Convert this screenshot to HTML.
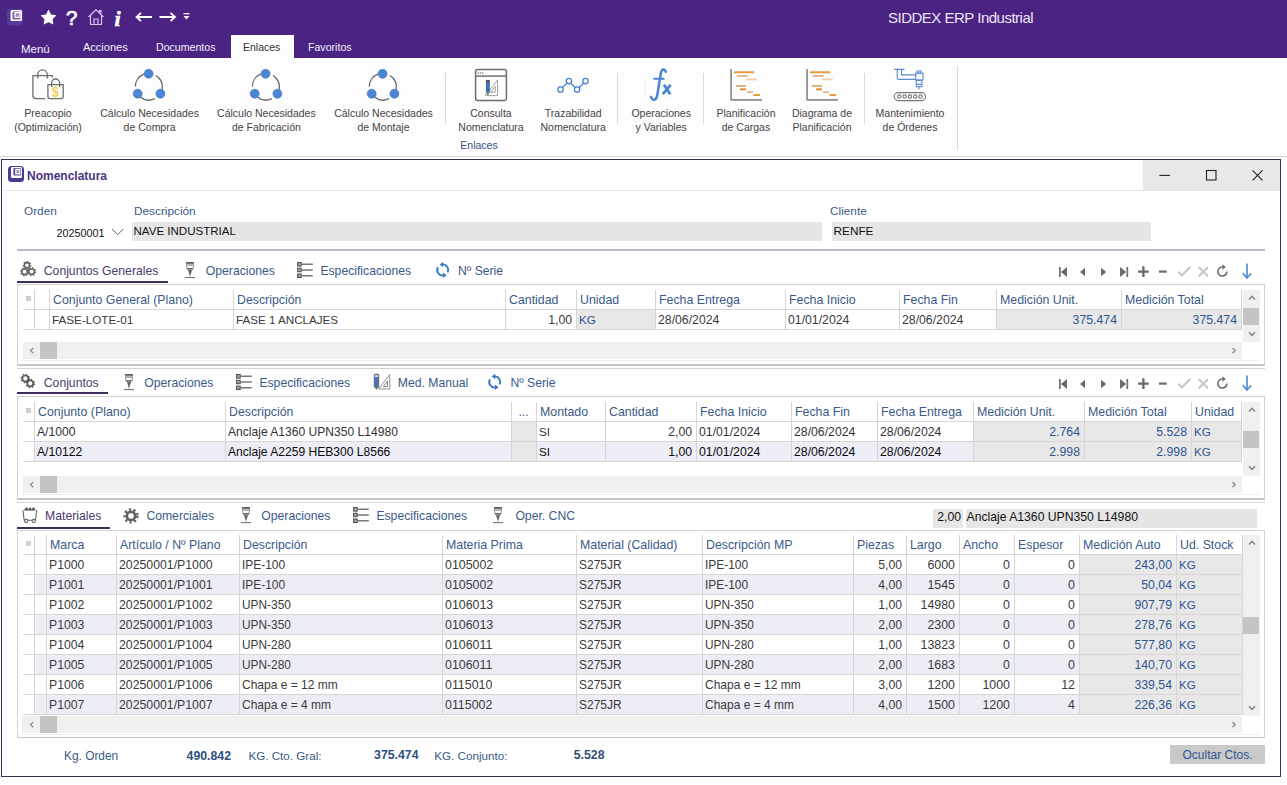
<!DOCTYPE html><html><head><meta charset="utf-8"><style>
html,body{margin:0;padding:0;}
body{width:1287px;height:785px;overflow:hidden;position:relative;background:#fefefe;font-family:'Liberation Sans',sans-serif;}
div{box-sizing:border-box;}
</style></head><body>
<div style="position:absolute;left:0px;top:0px;width:1287px;height:58px;background:#4b2383"></div>
<svg style="position:absolute;left:6px;top:8px;" width="18" height="18" viewBox="0 0 18 18"><rect x="1" y="1" width="16" height="16.5" rx="3" fill="#563a98"/><rect x="4.5" y="2" width="11.5" height="11" rx="1.5" fill="#fbf8ff"/><rect x="6.5" y="3.5" width="8" height="8" rx="1.2" fill="#7a66aa"/><rect x="9" y="4.6" width="5" height="4.8" rx="0.8" fill="#9c8cc4" stroke="#fff" stroke-width="1.3"/></svg>
<svg style="position:absolute;left:40px;top:9px;" width="17" height="17" viewBox="0 0 17 17"><path d="M8.50 0.60 L11.03 5.42 L16.39 6.34 L12.59 10.23 L13.38 15.61 L8.50 13.20 L3.62 15.61 L4.41 10.23 L0.61 6.34 L5.97 5.42 Z" fill="#fff"/></svg>
<div style="position:absolute;left:66px;top:7.50px;line-height:20px;font-family:'Liberation Sans',sans-serif;font-size:20.5px;color:#fff;font-weight:normal;white-space:nowrap;-webkit-text-stroke:0.7px #fff;">?</div>
<svg style="position:absolute;left:87px;top:8px;" width="18" height="18" viewBox="0 0 18 18"><path d="M1.5 9 L9 1.8 L16.5 9 M3.5 7.5 V16.5 H14.5 V7.5 M7 16.5 V11 H11 V16.5 M12.5 4 V2.5 H14 V5.5" fill="none" stroke="#d8c8f0" stroke-width="1.2"/></svg>
<div style="position:absolute;left:114.5px;top:8.50px;line-height:20px;font-family:'Liberation Serif',sans-serif;font-size:22px;color:#fff;font-weight:bold;white-space:nowrap;font-style:italic;-webkit-text-stroke:0.6px #fff;">i</div>
<svg style="position:absolute;left:135px;top:12px;" width="18" height="10" viewBox="0 0 18 10"><path d="M1.5 5 H17 M6 0.8 L1.5 5 L6 9.2" fill="none" stroke="#fff" stroke-width="1.8"/></svg>
<svg style="position:absolute;left:159px;top:12px;" width="18" height="10" viewBox="0 0 18 10"><path d="M0.5 5 H16 M11.5 0.8 L16 5 L11.5 9.2" fill="none" stroke="#fff" stroke-width="1.8"/></svg>
<svg style="position:absolute;left:183px;top:13px;" width="7" height="7" viewBox="0 0 7 7"><rect x="0.5" y="0" width="6" height="1.3" fill="#fff"/><path d="M0.5 3 H6.5 L3.5 6.5 Z" fill="#fff"/></svg>
<div style="position:absolute;left:888px;top:7.50px;line-height:20px;font-family:'Liberation Sans',sans-serif;font-size:15px;color:#ece6f6;font-weight:normal;white-space:nowrap;letter-spacing:-0.5px;">SIDDEX ERP Industrial</div>
<div style="position:absolute;left:21px;top:39.00px;line-height:20px;font-family:'Liberation Sans',sans-serif;font-size:11.5px;color:#f4f0fa;font-weight:normal;white-space:nowrap;">Menú</div>
<div style="position:absolute;left:83px;top:37.00px;line-height:20px;font-family:'Liberation Sans',sans-serif;font-size:11px;color:#f4f0fa;font-weight:normal;white-space:nowrap;">Acciones</div>
<div style="position:absolute;left:156px;top:37.00px;line-height:20px;font-family:'Liberation Sans',sans-serif;font-size:10.6px;color:#f4f0fa;font-weight:normal;white-space:nowrap;">Documentos</div>
<div style="position:absolute;left:231px;top:35px;width:63px;height:23px;background:#fdfdfd"></div>
<div style="position:absolute;left:243px;top:37.00px;line-height:20px;font-family:'Liberation Sans',sans-serif;font-size:10.5px;color:#333;font-weight:normal;white-space:nowrap;">Enlaces</div>
<div style="position:absolute;left:308px;top:37.00px;line-height:20px;font-family:'Liberation Sans',sans-serif;font-size:10.6px;color:#f4f0fa;font-weight:normal;white-space:nowrap;">Favoritos</div>
<div style="position:absolute;left:0px;top:156px;width:1287px;height:1px;background:#d4d4d4"></div>
<div style="position:absolute;left:0px;top:58px;width:1287px;height:98px;background:#fdfdfd"></div>
<svg style="position:absolute;left:26px;top:62px;" width="44" height="44" viewBox="0 0 44 44"><g fill="none" stroke="#6e6e6e" stroke-width="1.3">
<path d="M26.4 15.6 V13.6 H6.9 V33.6 Q6.9 36.7 10 36.7 H19.3"/>
<path d="M11.8 16.6 V12.6 A4.7 4.7 0 0 1 21.2 12.6 V16.6"/>
<path d="M21.9 22.6 H37.2 V34.6 Q37.2 36.7 35 36.7 H24.1 Q21.9 36.7 21.9 34.6 Z"/>
<path d="M25.6 25 V21 A4 4 0 0 1 33.6 21 V25"/></g>
<path d="M31.6 26.9 Q30.8 25.5 29.1 25.5 Q26.7 25.5 26.7 27.5 Q26.7 29.1 29.1 29.6 Q31.8 30.2 31.8 32.1 Q31.8 34.1 29.2 34.1 Q27.3 34.1 26.4 32.6" stroke="#f0d040" stroke-width="1.6" fill="none"/><path d="M29.2 23.8 V35.8" stroke="#f2dc70" stroke-width="0.9"/></svg>
<svg style="position:absolute;left:127px;top:62px;" width="44" height="44" viewBox="0 0 44 44"><g fill="none" stroke="#666" stroke-width="1.3">
<path d="M8.4 24.6 A13.2 13.2 0 0 1 16.8 12.2"/>
<path d="M29.0 13.5 A13.2 13.2 0 0 1 35.2 27.5"/>
<path d="M27.8 36.6 A13.2 13.2 0 0 1 13.4 35.0"/></g>
<g fill="#4a86d4" stroke="#3f70b8" stroke-width="0.6">
<circle cx="21.6" cy="11.8" r="4.5"/><circle cx="10.7" cy="31.7" r="4.5"/><circle cx="33.4" cy="31.7" r="4.5"/></g></svg>
<svg style="position:absolute;left:244px;top:62px;" width="44" height="44" viewBox="0 0 44 44"><g fill="none" stroke="#666" stroke-width="1.3">
<path d="M8.4 24.6 A13.2 13.2 0 0 1 16.8 12.2"/>
<path d="M29.0 13.5 A13.2 13.2 0 0 1 35.2 27.5"/>
<path d="M27.8 36.6 A13.2 13.2 0 0 1 13.4 35.0"/></g>
<g fill="#4a86d4" stroke="#3f70b8" stroke-width="0.6">
<circle cx="21.6" cy="11.8" r="4.5"/><circle cx="10.7" cy="31.7" r="4.5"/><circle cx="33.4" cy="31.7" r="4.5"/></g></svg>
<svg style="position:absolute;left:361px;top:62px;" width="44" height="44" viewBox="0 0 44 44"><g fill="none" stroke="#666" stroke-width="1.3">
<path d="M8.4 24.6 A13.2 13.2 0 0 1 16.8 12.2"/>
<path d="M29.0 13.5 A13.2 13.2 0 0 1 35.2 27.5"/>
<path d="M27.8 36.6 A13.2 13.2 0 0 1 13.4 35.0"/></g>
<g fill="#4a86d4" stroke="#3f70b8" stroke-width="0.6">
<circle cx="21.6" cy="11.8" r="4.5"/><circle cx="10.7" cy="31.7" r="4.5"/><circle cx="33.4" cy="31.7" r="4.5"/></g></svg>
<svg style="position:absolute;left:469px;top:62px;" width="44" height="44" viewBox="0 0 44 44"><g fill="none" stroke="#6e6e6e" stroke-width="1.5">
<rect x="6.6" y="7.5" width="30.8" height="31" rx="2"/><path d="M6.6 14.1 H37.4"/></g>
<g fill="#777"><rect x="8.7" y="10.3" width="1.3" height="1.3"/><rect x="10.9" y="10.3" width="1.3" height="1.3"/><rect x="13" y="10.3" width="1.3" height="1.3"/></g>
<path d="M16.3 33.6 H28.6 V18.2 Z M21.5 30.2 H26.2 V24.6 Z" fill="none" stroke="#888" stroke-width="0.8"/>
<rect x="16.9" y="18" width="4" height="2" fill="#555"/><rect x="16.9" y="20" width="4" height="10.4" fill="#3d70b2"/><path d="M16.9 30.4 H20.9 L18.9 33.5 Z" fill="#777"/></svg>
<svg style="position:absolute;left:551px;top:62px;" width="44" height="44" viewBox="0 0 44 44"><g fill="none" stroke="#4d80c8" stroke-width="1.3">
<path d="M11.5 25.5 L16 21.1 M19.9 21.1 L24.1 25.5 M28.1 25.5 L32.5 21.1"/>
<circle cx="9.5" cy="27.5" r="2.7"/><circle cx="17.9" cy="19.1" r="2.7"/><circle cx="26.1" cy="27.5" r="2.7"/><circle cx="34.5" cy="19.1" r="2.7"/></g></svg>
<svg style="position:absolute;left:639px;top:62px;" width="44" height="44" viewBox="0 0 44 44"><g fill="none" stroke="#4a86d0" stroke-linecap="round">
<path d="M12 35 Q13.5 38.3 15.8 37.6 Q17.6 37 18.3 33 L21.8 11.2 Q22.6 7.4 24.6 7.4 Q26.2 7.5 26.8 9.8" stroke-width="2.5"/>
<path d="M15.3 16.8 H24.6" stroke-width="2"/>
<path d="M25 22.8 L31.2 32.2 M31.6 22.8 L23.8 32.2" stroke-width="2.8" stroke-linecap="butt"/></g>
<path d="M6.4 18.5 V33.6" stroke="#e4e4e4" stroke-width="0.8"/></svg>
<svg style="position:absolute;left:723px;top:62px;" width="44" height="44" viewBox="0 0 44 44"><path d="M8.1 7 V37.8 H39" fill="none" stroke="#8c8c8c" stroke-width="1.7"/><rect x="10.9" y="9.3" width="20.200000000000003" height="1.9" fill="#e39b32"/><rect x="13.7" y="13.0" width="11.0" height="1.9" fill="#d9bb86"/><rect x="23" y="16.4" width="10.600000000000001" height="1.9" fill="#f2cdb0"/><rect x="12.9" y="23.0" width="10.1" height="1.9" fill="#dbb274"/><rect x="17.1" y="26.4" width="5.899999999999999" height="1.9" fill="#e28a22"/><rect x="24.1" y="29.2" width="5.899999999999999" height="1.9" fill="#dabb94"/><rect x="30.5" y="32.1" width="6.5" height="1.9" fill="#e99a2c"/></svg>
<svg style="position:absolute;left:798.5px;top:62px;" width="44" height="44" viewBox="0 0 44 44"><path d="M8.1 7 V37.8 H39" fill="none" stroke="#8c8c8c" stroke-width="1.7"/><rect x="10.9" y="9.3" width="20.200000000000003" height="1.9" fill="#e39b32"/><rect x="13.7" y="13.0" width="11.0" height="1.9" fill="#d9bb86"/><rect x="23" y="16.4" width="10.600000000000001" height="1.9" fill="#f2cdb0"/><rect x="12.9" y="23.0" width="10.1" height="1.9" fill="#dbb274"/><rect x="17.1" y="26.4" width="5.899999999999999" height="1.9" fill="#e28a22"/><rect x="24.1" y="29.2" width="5.899999999999999" height="1.9" fill="#dabb94"/><rect x="30.5" y="32.1" width="6.5" height="1.9" fill="#e99a2c"/></svg>
<svg style="position:absolute;left:888px;top:62px;" width="44" height="44" viewBox="0 0 44 44"><g fill="none" stroke="#5a8ad0" stroke-width="1.1">
<path d="M6.2 7.4 H16.5 M9.2 7.6 V15.8 Q9.2 17.4 10.9 17.4 H27.7 M13.5 7.6 V12.9 H27.7"/>
<rect x="27.7" y="11.2" width="7.3" height="6.7"/><rect x="29.1" y="9" width="3.9" height="2.2"/>
<rect x="28.3" y="18.5" width="5.6" height="6.2"/><path d="M28.3 22.4 H33.9 M31 24.7 V27.5" /></g>
<g fill="none" stroke="#7a7a7a" stroke-width="1.1">
<rect x="6.2" y="30.6" width="31.4" height="8" rx="4"/>
<circle cx="11.3" cy="34.6" r="1.7"/><circle cx="16.6" cy="34.6" r="1.7"/><circle cx="21.9" cy="34.6" r="1.7"/><circle cx="27.2" cy="34.6" r="1.7"/><circle cx="32.5" cy="34.6" r="1.7"/></g></svg>
<div style="position:absolute;left:445px;top:73px;width:1px;height:51px;background:#d8d8d8"></div>
<div style="position:absolute;left:617px;top:73px;width:1px;height:51px;background:#d8d8d8"></div>
<div style="position:absolute;left:703px;top:73px;width:1px;height:51px;background:#d8d8d8"></div>
<div style="position:absolute;left:864px;top:73px;width:1px;height:51px;background:#d8d8d8"></div>
<div style="position:absolute;left:957px;top:66px;width:1px;height:84px;background:#d8d8d8"></div>
<div style="position:absolute;left:-17.0px;width:130px;text-align:center;top:103.00px;line-height:20px;font-family:'Liberation Sans',sans-serif;font-size:10.5px;color:#444;font-weight:normal;white-space:nowrap;">Preacopio</div>
<div style="position:absolute;left:-17.0px;width:130px;text-align:center;top:117.00px;line-height:20px;font-family:'Liberation Sans',sans-serif;font-size:10.5px;color:#444;font-weight:normal;white-space:nowrap;">(Optimización)</div>
<div style="position:absolute;left:84.6px;width:130px;text-align:center;top:103.00px;line-height:20px;font-family:'Liberation Sans',sans-serif;font-size:10.5px;color:#444;font-weight:normal;white-space:nowrap;">Cálculo Necesidades</div>
<div style="position:absolute;left:84.6px;width:130px;text-align:center;top:117.00px;line-height:20px;font-family:'Liberation Sans',sans-serif;font-size:10.5px;color:#444;font-weight:normal;white-space:nowrap;">de Compra</div>
<div style="position:absolute;left:201.39999999999998px;width:130px;text-align:center;top:103.00px;line-height:20px;font-family:'Liberation Sans',sans-serif;font-size:10.5px;color:#444;font-weight:normal;white-space:nowrap;">Cálculo Necesidades</div>
<div style="position:absolute;left:201.39999999999998px;width:130px;text-align:center;top:117.00px;line-height:20px;font-family:'Liberation Sans',sans-serif;font-size:10.5px;color:#444;font-weight:normal;white-space:nowrap;">de Fabricación</div>
<div style="position:absolute;left:318.5px;width:130px;text-align:center;top:103.00px;line-height:20px;font-family:'Liberation Sans',sans-serif;font-size:10.5px;color:#444;font-weight:normal;white-space:nowrap;">Cálculo Necesidades</div>
<div style="position:absolute;left:318.5px;width:130px;text-align:center;top:117.00px;line-height:20px;font-family:'Liberation Sans',sans-serif;font-size:10.5px;color:#444;font-weight:normal;white-space:nowrap;">de Montaje</div>
<div style="position:absolute;left:426.0px;width:130px;text-align:center;top:103.00px;line-height:20px;font-family:'Liberation Sans',sans-serif;font-size:10.5px;color:#444;font-weight:normal;white-space:nowrap;">Consulta</div>
<div style="position:absolute;left:426.0px;width:130px;text-align:center;top:117.00px;line-height:20px;font-family:'Liberation Sans',sans-serif;font-size:10.5px;color:#444;font-weight:normal;white-space:nowrap;">Nomenclatura</div>
<div style="position:absolute;left:508.20000000000005px;width:130px;text-align:center;top:103.00px;line-height:20px;font-family:'Liberation Sans',sans-serif;font-size:10.5px;color:#444;font-weight:normal;white-space:nowrap;">Trazabilidad</div>
<div style="position:absolute;left:508.20000000000005px;width:130px;text-align:center;top:117.00px;line-height:20px;font-family:'Liberation Sans',sans-serif;font-size:10.5px;color:#444;font-weight:normal;white-space:nowrap;">Nomenclatura</div>
<div style="position:absolute;left:596.2px;width:130px;text-align:center;top:103.00px;line-height:20px;font-family:'Liberation Sans',sans-serif;font-size:10.5px;color:#444;font-weight:normal;white-space:nowrap;">Operaciones</div>
<div style="position:absolute;left:596.2px;width:130px;text-align:center;top:117.00px;line-height:20px;font-family:'Liberation Sans',sans-serif;font-size:10.5px;color:#444;font-weight:normal;white-space:nowrap;">y Variables</div>
<div style="position:absolute;left:681.0px;width:130px;text-align:center;top:103.00px;line-height:20px;font-family:'Liberation Sans',sans-serif;font-size:10.5px;color:#444;font-weight:normal;white-space:nowrap;">Planificación</div>
<div style="position:absolute;left:681.0px;width:130px;text-align:center;top:117.00px;line-height:20px;font-family:'Liberation Sans',sans-serif;font-size:10.5px;color:#444;font-weight:normal;white-space:nowrap;">de Cargas</div>
<div style="position:absolute;left:757.0px;width:130px;text-align:center;top:103.00px;line-height:20px;font-family:'Liberation Sans',sans-serif;font-size:10.5px;color:#444;font-weight:normal;white-space:nowrap;">Diagrama de</div>
<div style="position:absolute;left:757.0px;width:130px;text-align:center;top:117.00px;line-height:20px;font-family:'Liberation Sans',sans-serif;font-size:10.5px;color:#444;font-weight:normal;white-space:nowrap;">Planificación</div>
<div style="position:absolute;left:845.0px;width:130px;text-align:center;top:103.00px;line-height:20px;font-family:'Liberation Sans',sans-serif;font-size:10.5px;color:#444;font-weight:normal;white-space:nowrap;">Mantenimiento</div>
<div style="position:absolute;left:845.0px;width:130px;text-align:center;top:117.00px;line-height:20px;font-family:'Liberation Sans',sans-serif;font-size:10.5px;color:#444;font-weight:normal;white-space:nowrap;">de Órdenes</div>
<div style="position:absolute;left:439.0px;width:80px;text-align:center;top:135.00px;line-height:20px;font-family:'Liberation Sans',sans-serif;font-size:10.5px;color:#2f5080;font-weight:normal;white-space:nowrap;">Enlaces</div>
<div style="position:absolute;left:1px;top:159px;width:1280px;height:618px;background:#fff;border:1px solid #3b3056"></div>
<div style="position:absolute;left:3px;top:190px;width:1277px;height:1px;background:#e6e6e6"></div>
<svg style="position:absolute;left:8px;top:166px;" width="16" height="16" viewBox="0 0 16 16"><rect x="0" y="0" width="16" height="16" rx="3.5" fill="#4a3a94"/><rect x="3" y="1" width="11" height="11" rx="1.2" fill="#fff"/><rect x="5.3" y="2" width="7.8" height="7.6" rx="1" fill="#5e4ca0"/><rect x="7.9" y="3.4" width="3.9" height="4.4" fill="#9890b8" stroke="#fff" stroke-width="1.3"/></svg>
<div style="position:absolute;left:27px;top:166.00px;line-height:20px;font-family:'Liberation Sans',sans-serif;font-size:12px;color:#4a3580;font-weight:bold;white-space:nowrap;">Nomenclatura</div>
<div style="position:absolute;left:1143px;top:160px;width:137px;height:30px;background:#e8e8e8"></div>
<svg style="position:absolute;left:1143px;top:160px;" width="137" height="30" viewBox="0 0 137 30"><g stroke="#222" stroke-width="1.1" fill="none"><path d="M16.4 15.4 H27"/><rect x="63.5" y="10.5" width="9.5" height="9.5"/><path d="M109.5 10.3 L119.5 20.3 M119.5 10.3 L109.5 20.3"/></g></svg>
<div style="position:absolute;left:24px;top:201.00px;line-height:20px;font-family:'Liberation Sans',sans-serif;font-size:11.8px;color:#3a5a86;font-weight:normal;white-space:nowrap;">Orden</div>
<div style="position:absolute;left:134px;top:201.00px;line-height:20px;font-family:'Liberation Sans',sans-serif;font-size:11.8px;color:#3a5a86;font-weight:normal;white-space:nowrap;">Descripción</div>
<div style="position:absolute;left:830px;top:201.00px;line-height:20px;font-family:'Liberation Sans',sans-serif;font-size:11.8px;color:#3a5a86;font-weight:normal;white-space:nowrap;">Cliente</div>
<div style="position:absolute;right:1182.5px;top:223.00px;line-height:20px;font-family:'Liberation Sans',sans-serif;font-size:10.8px;color:#111;font-weight:normal;white-space:nowrap;">20250001</div>
<svg style="position:absolute;left:111px;top:228px;" width="14" height="8" viewBox="0 0 14 8"><path d="M1 1 L6.7 6.5 L12.4 1" fill="none" stroke="#555" stroke-width="0.9"/></svg>
<div style="position:absolute;left:132px;top:222px;width:690px;height:19px;background:#e6e6e6"></div>
<div style="position:absolute;left:133.5px;top:221.00px;line-height:20px;font-family:'Liberation Sans',sans-serif;font-size:11.55px;color:#111;font-weight:normal;white-space:nowrap;">NAVE INDUSTRIAL</div>
<div style="position:absolute;left:832px;top:222px;width:319px;height:19px;background:#e6e6e6"></div>
<div style="position:absolute;left:833.5px;top:221.00px;line-height:20px;font-family:'Liberation Sans',sans-serif;font-size:11.8px;color:#111;font-weight:normal;white-space:nowrap;">RENFE</div>
<div style="position:absolute;left:17px;top:249px;width:1248px;height:2px;background:#bdbac8"></div>
<svg style="position:absolute;left:16px;top:258px;" width="24" height="24" viewBox="0 0 24 24"><circle cx="11" cy="7.2" r="2.6" fill="none" stroke="#666" stroke-width="1.6"/><circle cx="11" cy="7.2" r="3.6" fill="none" stroke="#666" stroke-width="1.6" stroke-dasharray="1.45 1.78"/><circle cx="8.6" cy="13.8" r="2.8" fill="none" stroke="#666" stroke-width="1.6"/><circle cx="8.6" cy="13.8" r="3.8" fill="none" stroke="#666" stroke-width="1.6" stroke-dasharray="1.34 1.64"/><circle cx="15.6" cy="13.6" r="2.8" fill="none" stroke="#666" stroke-width="1.6"/><circle cx="15.6" cy="13.6" r="3.8" fill="none" stroke="#666" stroke-width="1.6" stroke-dasharray="1.34 1.64"/></svg>
<div style="position:absolute;left:43.8px;top:261.00px;line-height:20px;font-family:'Liberation Sans',sans-serif;font-size:12.2px;color:#4a3a6e;font-weight:normal;white-space:nowrap;">Conjuntos Generales</div>
<svg style="position:absolute;left:180px;top:258px;" width="20" height="24" viewBox="0 0 20 24"><rect x="6" y="4" width="8" height="1.8" fill="#5e5e5e"/>
<path d="M6.7 5.8 V8.8 Q6.7 10.8 8 12 H12 Q13.3 10.8 13.3 8.8 V5.8" fill="none" stroke="#888" stroke-width="1"/>
<rect x="7.2" y="6.4" width="5.6" height="1.3" fill="#8a8a8a"/><rect x="7.2" y="10" width="5.6" height="1.4" fill="#6a6a6a"/>
<path d="M8 12 H12 L10.4 17.4 H9.6 Z" fill="#666"/>
<rect x="9.6" y="17.2" width="0.8" height="1.8" fill="#aaa"/><rect x="5" y="19" width="10" height="1.1" fill="#777"/></svg>
<div style="position:absolute;left:205.8px;top:261.00px;line-height:20px;font-family:'Liberation Sans',sans-serif;font-size:12.2px;color:#3a5a88;font-weight:normal;white-space:nowrap;">Operaciones</div>
<svg style="position:absolute;left:294px;top:258px;" width="24" height="24" viewBox="0 0 24 24"><g fill="#a4a8b4" stroke="#555" stroke-width="1.1"><rect x="3.6" y="4.5" width="3.6" height="3.6"/><rect x="3.6" y="10.3" width="3.6" height="3.4"/><rect x="3.6" y="16.1" width="3.6" height="3.4"/></g>
<g stroke="#777" stroke-width="1.5"><path d="M7.6 6.3 H18.8 M7.6 11.9 H18.8 M7.6 17.7 H18.8"/></g></svg>
<div style="position:absolute;left:320.4px;top:261.00px;line-height:20px;font-family:'Liberation Sans',sans-serif;font-size:12.2px;color:#3a5a88;font-weight:normal;white-space:nowrap;">Especificaciones</div>
<svg style="position:absolute;left:432px;top:258px;" width="24" height="24" viewBox="0 0 24 24"><g fill="none" stroke="#3d78c0" stroke-width="1.9"><path d="M10.8 6.4 A5.5 5.5 0 0 1 15.6 14.3"/><path d="M6 9.2 A5.5 5.5 0 0 0 11.4 17.5"/></g>
<path d="M11.2 3.8 L7.7 6.4 L11.2 9.2 Z M11 14.6 L14.6 17.3 L11 20 Z" fill="#3d78c0"/></svg>
<div style="position:absolute;left:458px;top:261.00px;line-height:20px;font-family:'Liberation Sans',sans-serif;font-size:12.2px;color:#3a5a88;font-weight:normal;white-space:nowrap;">Nº Serie</div>
<div style="position:absolute;left:17px;top:281px;width:151px;height:2px;background:#3e2d5e"></div>
<svg style="position:absolute;left:1055px;top:258px;" width="200" height="24" viewBox="0 0 200 24"><rect x="4" y="9" width="1.7" height="10" fill="#6a6a6a"/><path d="M12 9 L6 14 L12 19 Z" fill="#6a6a6a"/>
<path d="M30 9.8 L25 14 L30 18.2 Z" fill="#6a6a6a"/>
<path d="M46 9.8 L51.3 14 L46 18.2 Z" fill="#6a6a6a"/>
<path d="M65 9 L71.2 14 L65 19 Z" fill="#6a6a6a"/><rect x="71.5" y="9" width="1.7" height="10" fill="#6a6a6a"/>
<path d="M83 13.6 H93.7 M88.4 8.3 V19" stroke="#6a6a6a" stroke-width="2.3"/>
<path d="M104 13.6 H111.7" stroke="#6a6a6a" stroke-width="2.2"/>
<path d="M123.3 13.6 L126.6 17.6 L135.2 9" fill="none" stroke="#c4c4c4" stroke-width="1.9"/>
<path d="M143.8 9.3 L153 18.3 M153 9.3 L143.8 18.3" stroke="#c4c4c4" stroke-width="1.9"/>
<path d="M167.4 9 A4.5 4.5 0 1 0 171.9 13.5" fill="none" stroke="#6a6a6a" stroke-width="1.6"/><path d="M167.4 6.2 L170.8 9 L167.4 11.8 Z" fill="#6a6a6a"/>
<path d="M192 5.5 V19.5" stroke="#4a86d0" stroke-width="1.6"/><path d="M187.8 15.2 L192 20 L196.2 15.2" fill="none" stroke="#4a86d0" stroke-width="1.6"/></svg>
<div style="position:absolute;left:17px;top:284px;width:1248px;height:82px;border:1px solid #d2d2d2;border-bottom:2px solid #c6c6c6;background:#fff"></div>
<div style="position:absolute;left:576px;top:310px;width:79px;height:19px;background:#e8e8e8"></div>
<div style="position:absolute;left:996px;top:310px;width:125px;height:19px;background:#e8e8e8"></div>
<div style="position:absolute;left:1121px;top:310px;width:120px;height:19px;background:#e8e8e8"></div>
<div style="position:absolute;left:34px;top:290px;width:1px;height:40px;background:#d6d6d6"></div>
<div style="position:absolute;left:49px;top:290px;width:1px;height:40px;background:#d6d6d6"></div>
<div style="position:absolute;left:233px;top:290px;width:1px;height:40px;background:#d6d6d6"></div>
<div style="position:absolute;left:505px;top:290px;width:1px;height:40px;background:#d6d6d6"></div>
<div style="position:absolute;left:576px;top:290px;width:1px;height:40px;background:#d6d6d6"></div>
<div style="position:absolute;left:655px;top:290px;width:1px;height:40px;background:#d6d6d6"></div>
<div style="position:absolute;left:785px;top:290px;width:1px;height:40px;background:#d6d6d6"></div>
<div style="position:absolute;left:899px;top:290px;width:1px;height:40px;background:#d6d6d6"></div>
<div style="position:absolute;left:996px;top:290px;width:1px;height:40px;background:#d6d6d6"></div>
<div style="position:absolute;left:1121px;top:290px;width:1px;height:40px;background:#d6d6d6"></div>
<div style="position:absolute;left:1241px;top:290px;width:1px;height:40px;background:#d6d6d6"></div>
<div style="position:absolute;left:23px;top:309px;width:1219px;height:1px;background:#d6d6d6"></div>
<div style="position:absolute;left:23px;top:329px;width:1219px;height:1px;background:#d6d6d6"></div>
<div style="position:absolute;left:26px;top:296px;width:5px;height:5px;background:#cfcfcf"></div>
<div style="position:absolute;left:53px;top:290.00px;line-height:20px;font-family:'Liberation Sans',sans-serif;font-size:12.35px;color:#3a5a88;font-weight:normal;white-space:nowrap;">Conjunto General (Plano)</div>
<div style="position:absolute;left:237px;top:290.00px;line-height:20px;font-family:'Liberation Sans',sans-serif;font-size:12.35px;color:#3a5a88;font-weight:normal;white-space:nowrap;">Descripción</div>
<div style="position:absolute;left:509px;top:290.00px;line-height:20px;font-family:'Liberation Sans',sans-serif;font-size:12.35px;color:#3a5a88;font-weight:normal;white-space:nowrap;">Cantidad</div>
<div style="position:absolute;left:580px;top:290.00px;line-height:20px;font-family:'Liberation Sans',sans-serif;font-size:12.35px;color:#3a5a88;font-weight:normal;white-space:nowrap;">Unidad</div>
<div style="position:absolute;left:659px;top:290.00px;line-height:20px;font-family:'Liberation Sans',sans-serif;font-size:12.35px;color:#3a5a88;font-weight:normal;white-space:nowrap;">Fecha Entrega</div>
<div style="position:absolute;left:789px;top:290.00px;line-height:20px;font-family:'Liberation Sans',sans-serif;font-size:12.35px;color:#3a5a88;font-weight:normal;white-space:nowrap;">Fecha Inicio</div>
<div style="position:absolute;left:903px;top:290.00px;line-height:20px;font-family:'Liberation Sans',sans-serif;font-size:12.35px;color:#3a5a88;font-weight:normal;white-space:nowrap;">Fecha Fin</div>
<div style="position:absolute;left:1000px;top:290.00px;line-height:20px;font-family:'Liberation Sans',sans-serif;font-size:12.35px;color:#3a5a88;font-weight:normal;white-space:nowrap;">Medición Unit.</div>
<div style="position:absolute;left:1125px;top:290.00px;line-height:20px;font-family:'Liberation Sans',sans-serif;font-size:12.35px;color:#3a5a88;font-weight:normal;white-space:nowrap;">Medición Total</div>
<div style="position:absolute;left:52px;top:309.50px;line-height:20px;font-family:'Liberation Sans',sans-serif;font-size:11.69px;color:#3a3a3a;font-weight:normal;white-space:nowrap;">FASE-LOTE-01</div>
<div style="position:absolute;left:236px;top:309.50px;line-height:20px;font-family:'Liberation Sans',sans-serif;font-size:11.63px;color:#3a3a3a;font-weight:normal;white-space:nowrap;">FASE 1 ANCLAJES</div>
<div style="position:absolute;right:715px;top:310.00px;line-height:20px;font-family:'Liberation Sans',sans-serif;font-size:12.23px;color:#3a3a3a;font-weight:normal;white-space:nowrap;">1,00</div>
<div style="position:absolute;left:579px;top:310.00px;line-height:20px;font-family:'Liberation Sans',sans-serif;font-size:11.6px;color:#30558f;font-weight:normal;white-space:nowrap;">KG</div>
<div style="position:absolute;left:658px;top:310.00px;line-height:20px;font-family:'Liberation Sans',sans-serif;font-size:12.27px;color:#3a3a3a;font-weight:normal;white-space:nowrap;">28/06/2024</div>
<div style="position:absolute;left:788px;top:310.00px;line-height:20px;font-family:'Liberation Sans',sans-serif;font-size:12.27px;color:#3a3a3a;font-weight:normal;white-space:nowrap;">01/01/2024</div>
<div style="position:absolute;left:902px;top:310.00px;line-height:20px;font-family:'Liberation Sans',sans-serif;font-size:12.27px;color:#3a3a3a;font-weight:normal;white-space:nowrap;">28/06/2024</div>
<div style="position:absolute;right:170px;top:310.00px;line-height:20px;font-family:'Liberation Sans',sans-serif;font-size:12.31px;color:#30558f;font-weight:normal;white-space:nowrap;">375.474</div>
<div style="position:absolute;right:50px;top:310.00px;line-height:20px;font-family:'Liberation Sans',sans-serif;font-size:12.31px;color:#30558f;font-weight:normal;white-space:nowrap;">375.474</div>
<div style="position:absolute;left:1243px;top:290px;width:17px;height:52px;background:#f0f0f0"></div>
<div style="position:absolute;left:1243px;top:308px;width:16px;height:17px;background:#c4c4c4"></div>
<svg style="position:absolute;left:1248px;top:295px;" width="8" height="6" viewBox="0 0 8 6"><path d="M1 4.5 L4 1.3 L7 4.5" fill="none" stroke="#808080" stroke-width="1.4"/></svg>
<svg style="position:absolute;left:1248px;top:331px;" width="8" height="6" viewBox="0 0 8 6"><path d="M1 1.3 L4 4.5 L7 1.3" fill="none" stroke="#808080" stroke-width="1.4"/></svg>
<div style="position:absolute;left:23px;top:342px;width:1219px;height:17px;background:#f0f0f0"></div>
<div style="position:absolute;left:40px;top:342px;width:17px;height:17px;background:#c4c4c4"></div>
<div style="position:absolute;left:21px;top:360px;width:1239px;height:1px;background:#f0f0f0"></div>
<svg style="position:absolute;left:29px;top:347px;" width="6" height="7" viewBox="0 0 6 7"><path d="M4.3 1 L1.5 3.6 L4.3 6.2" fill="none" stroke="#8a8a8a" stroke-width="1.2"/></svg>
<svg style="position:absolute;left:1231px;top:347px;" width="6" height="7" viewBox="0 0 6 7"><path d="M1.5 1 L4.3 3.6 L1.5 6.2" fill="none" stroke="#8a8a8a" stroke-width="1.2"/></svg>
<div style="position:absolute;left:17px;top:368px;width:1248px;height:1px;background:#d2d2d2"></div>
<svg style="position:absolute;left:16px;top:370px;" width="24" height="24" viewBox="0 0 24 24"><circle cx="9.3" cy="8.5" r="3.0" fill="none" stroke="#5a5a5a" stroke-width="1.7"/><circle cx="9.3" cy="8.5" r="4.0" fill="none" stroke="#5a5a5a" stroke-width="1.6" stroke-dasharray="1.41 1.73"/><circle cx="14.3" cy="13.5" r="3.0" fill="none" stroke="#5a5a5a" stroke-width="1.7"/><circle cx="14.3" cy="13.5" r="4.0" fill="none" stroke="#5a5a5a" stroke-width="1.6" stroke-dasharray="1.41 1.73"/></svg>
<div style="position:absolute;left:43.8px;top:373.00px;line-height:20px;font-family:'Liberation Sans',sans-serif;font-size:12.2px;color:#4a3a6e;font-weight:normal;white-space:nowrap;">Conjuntos</div>
<svg style="position:absolute;left:119px;top:370px;" width="20" height="24" viewBox="0 0 20 24"><rect x="6" y="4" width="8" height="1.8" fill="#5e5e5e"/>
<path d="M6.7 5.8 V8.8 Q6.7 10.8 8 12 H12 Q13.3 10.8 13.3 8.8 V5.8" fill="none" stroke="#888" stroke-width="1"/>
<rect x="7.2" y="6.4" width="5.6" height="1.3" fill="#8a8a8a"/><rect x="7.2" y="10" width="5.6" height="1.4" fill="#6a6a6a"/>
<path d="M8 12 H12 L10.4 17.4 H9.6 Z" fill="#666"/>
<rect x="9.6" y="17.2" width="0.8" height="1.8" fill="#aaa"/><rect x="5" y="19" width="10" height="1.1" fill="#777"/></svg>
<div style="position:absolute;left:144.3px;top:373.00px;line-height:20px;font-family:'Liberation Sans',sans-serif;font-size:12.2px;color:#3a5a88;font-weight:normal;white-space:nowrap;">Operaciones</div>
<svg style="position:absolute;left:233px;top:370px;" width="24" height="24" viewBox="0 0 24 24"><g fill="#a4a8b4" stroke="#555" stroke-width="1.1"><rect x="3.6" y="4.5" width="3.6" height="3.6"/><rect x="3.6" y="10.3" width="3.6" height="3.4"/><rect x="3.6" y="16.1" width="3.6" height="3.4"/></g>
<g stroke="#777" stroke-width="1.5"><path d="M7.6 6.3 H18.8 M7.6 11.9 H18.8 M7.6 17.7 H18.8"/></g></svg>
<div style="position:absolute;left:259.4px;top:373.00px;line-height:20px;font-family:'Liberation Sans',sans-serif;font-size:12.2px;color:#3a5a88;font-weight:normal;white-space:nowrap;">Especificaciones</div>
<svg style="position:absolute;left:370px;top:370px;" width="24" height="24" viewBox="0 0 24 24"><path d="M8.6 19 H19.8 V4.4 Z" fill="none" stroke="#888" stroke-width="0.9"/><path d="M13.3 16.5 H17.5 V11.2 Z" fill="none" stroke="#777" stroke-width="0.9"/>
<rect x="4.3" y="4.2" width="4.4" height="13.2" rx="1" fill="#4a70b8" stroke="#555" stroke-width="0.8"/><rect x="5" y="5.2" width="3" height="1.8" fill="#dfe8f8"/><path d="M4.4 17.2 L6.5 19.7 L8.6 17.2 Z" fill="#8a7060"/></svg>
<div style="position:absolute;left:397.8px;top:373.00px;line-height:20px;font-family:'Liberation Sans',sans-serif;font-size:12.2px;color:#3a5a88;font-weight:normal;white-space:nowrap;">Med. Manual</div>
<svg style="position:absolute;left:484px;top:370px;" width="24" height="24" viewBox="0 0 24 24"><g fill="none" stroke="#3d78c0" stroke-width="1.9"><path d="M10.8 6.4 A5.5 5.5 0 0 1 15.6 14.3"/><path d="M6 9.2 A5.5 5.5 0 0 0 11.4 17.5"/></g>
<path d="M11.2 3.8 L7.7 6.4 L11.2 9.2 Z M11 14.6 L14.6 17.3 L11 20 Z" fill="#3d78c0"/></svg>
<div style="position:absolute;left:510.4px;top:373.00px;line-height:20px;font-family:'Liberation Sans',sans-serif;font-size:12.2px;color:#3a5a88;font-weight:normal;white-space:nowrap;">Nº Serie</div>
<div style="position:absolute;left:17px;top:392px;width:91px;height:2px;background:#3e2d5e"></div>
<svg style="position:absolute;left:1055px;top:370px;" width="200" height="24" viewBox="0 0 200 24"><rect x="4" y="9" width="1.7" height="10" fill="#6a6a6a"/><path d="M12 9 L6 14 L12 19 Z" fill="#6a6a6a"/>
<path d="M30 9.8 L25 14 L30 18.2 Z" fill="#6a6a6a"/>
<path d="M46 9.8 L51.3 14 L46 18.2 Z" fill="#6a6a6a"/>
<path d="M65 9 L71.2 14 L65 19 Z" fill="#6a6a6a"/><rect x="71.5" y="9" width="1.7" height="10" fill="#6a6a6a"/>
<path d="M83 13.6 H93.7 M88.4 8.3 V19" stroke="#6a6a6a" stroke-width="2.3"/>
<path d="M104 13.6 H111.7" stroke="#6a6a6a" stroke-width="2.2"/>
<path d="M123.3 13.6 L126.6 17.6 L135.2 9" fill="none" stroke="#c4c4c4" stroke-width="1.9"/>
<path d="M143.8 9.3 L153 18.3 M153 9.3 L143.8 18.3" stroke="#c4c4c4" stroke-width="1.9"/>
<path d="M167.4 9 A4.5 4.5 0 1 0 171.9 13.5" fill="none" stroke="#6a6a6a" stroke-width="1.6"/><path d="M167.4 6.2 L170.8 9 L167.4 11.8 Z" fill="#6a6a6a"/>
<path d="M192 5.5 V19.5" stroke="#4a86d0" stroke-width="1.6"/><path d="M187.8 15.2 L192 20 L196.2 15.2" fill="none" stroke="#4a86d0" stroke-width="1.6"/></svg>
<div style="position:absolute;left:17px;top:396px;width:1248px;height:104px;border:1px solid #d2d2d2;border-bottom:2px solid #c6c6c6;background:#fff"></div>
<div style="position:absolute;left:511px;top:422px;width:25px;height:19px;background:#e8e8e8"></div>
<div style="position:absolute;left:973px;top:422px;width:111px;height:19px;background:#e8e8e8"></div>
<div style="position:absolute;left:1084px;top:422px;width:107px;height:19px;background:#e8e8e8"></div>
<div style="position:absolute;left:1191px;top:422px;width:50px;height:19px;background:#e8e8e8"></div>
<div style="position:absolute;left:34px;top:442px;width:1207px;height:19px;background:#ededf6"></div>
<div style="position:absolute;left:511px;top:442px;width:25px;height:19px;background:#e8e8e8"></div>
<div style="position:absolute;left:973px;top:442px;width:111px;height:19px;background:#e8e8e8"></div>
<div style="position:absolute;left:1084px;top:442px;width:107px;height:19px;background:#e8e8e8"></div>
<div style="position:absolute;left:1191px;top:442px;width:50px;height:19px;background:#e8e8e8"></div>
<div style="position:absolute;left:34px;top:402px;width:1px;height:60px;background:#d6d6d6"></div>
<div style="position:absolute;left:225px;top:402px;width:1px;height:60px;background:#d6d6d6"></div>
<div style="position:absolute;left:511px;top:402px;width:1px;height:60px;background:#d6d6d6"></div>
<div style="position:absolute;left:536px;top:402px;width:1px;height:60px;background:#d6d6d6"></div>
<div style="position:absolute;left:605px;top:402px;width:1px;height:60px;background:#d6d6d6"></div>
<div style="position:absolute;left:696px;top:402px;width:1px;height:60px;background:#d6d6d6"></div>
<div style="position:absolute;left:791px;top:402px;width:1px;height:60px;background:#d6d6d6"></div>
<div style="position:absolute;left:877px;top:402px;width:1px;height:60px;background:#d6d6d6"></div>
<div style="position:absolute;left:973px;top:402px;width:1px;height:60px;background:#d6d6d6"></div>
<div style="position:absolute;left:1084px;top:402px;width:1px;height:60px;background:#d6d6d6"></div>
<div style="position:absolute;left:1191px;top:402px;width:1px;height:60px;background:#d6d6d6"></div>
<div style="position:absolute;left:1241px;top:402px;width:1px;height:60px;background:#d6d6d6"></div>
<div style="position:absolute;left:23px;top:421px;width:1219px;height:1px;background:#d6d6d6"></div>
<div style="position:absolute;left:23px;top:441px;width:1219px;height:1px;background:#d6d6d6"></div>
<div style="position:absolute;left:23px;top:461px;width:1219px;height:1px;background:#d6d6d6"></div>
<div style="position:absolute;left:26px;top:408px;width:5px;height:5px;background:#cfcfcf"></div>
<div style="position:absolute;left:38px;top:402.00px;line-height:20px;font-family:'Liberation Sans',sans-serif;font-size:12.35px;color:#3a5a88;font-weight:normal;white-space:nowrap;">Conjunto (Plano)</div>
<div style="position:absolute;left:229px;top:402.00px;line-height:20px;font-family:'Liberation Sans',sans-serif;font-size:12.35px;color:#3a5a88;font-weight:normal;white-space:nowrap;">Descripción</div>
<div style="position:absolute;left:511.0px;width:25px;text-align:center;top:402.00px;line-height:20px;font-family:'Liberation Sans',sans-serif;font-size:12.2px;color:#3a5a88;font-weight:normal;white-space:nowrap;">...</div>
<div style="position:absolute;left:540px;top:402.00px;line-height:20px;font-family:'Liberation Sans',sans-serif;font-size:12.35px;color:#3a5a88;font-weight:normal;white-space:nowrap;">Montado</div>
<div style="position:absolute;left:609px;top:402.00px;line-height:20px;font-family:'Liberation Sans',sans-serif;font-size:12.35px;color:#3a5a88;font-weight:normal;white-space:nowrap;">Cantidad</div>
<div style="position:absolute;left:700px;top:402.00px;line-height:20px;font-family:'Liberation Sans',sans-serif;font-size:12.35px;color:#3a5a88;font-weight:normal;white-space:nowrap;">Fecha Inicio</div>
<div style="position:absolute;left:795px;top:402.00px;line-height:20px;font-family:'Liberation Sans',sans-serif;font-size:12.35px;color:#3a5a88;font-weight:normal;white-space:nowrap;">Fecha Fin</div>
<div style="position:absolute;left:881px;top:402.00px;line-height:20px;font-family:'Liberation Sans',sans-serif;font-size:12.35px;color:#3a5a88;font-weight:normal;white-space:nowrap;">Fecha Entrega</div>
<div style="position:absolute;left:977px;top:402.00px;line-height:20px;font-family:'Liberation Sans',sans-serif;font-size:12.35px;color:#3a5a88;font-weight:normal;white-space:nowrap;">Medición Unit.</div>
<div style="position:absolute;left:1088px;top:402.00px;line-height:20px;font-family:'Liberation Sans',sans-serif;font-size:12.35px;color:#3a5a88;font-weight:normal;white-space:nowrap;">Medición Total</div>
<div style="position:absolute;left:1195px;top:402.00px;line-height:20px;font-family:'Liberation Sans',sans-serif;font-size:12.35px;color:#3a5a88;font-weight:normal;white-space:nowrap;">Unidad</div>
<div style="position:absolute;left:37px;top:422.00px;line-height:20px;font-family:'Liberation Sans',sans-serif;font-size:12.13px;color:#333;font-weight:normal;white-space:nowrap;">A/1000</div>
<div style="position:absolute;left:228px;top:422.00px;line-height:20px;font-family:'Liberation Sans',sans-serif;font-size:12.08px;color:#333;font-weight:normal;white-space:nowrap;">Anclaje A1360 UPN350 L14980</div>
<div style="position:absolute;left:539px;top:422.00px;line-height:20px;font-family:'Liberation Sans',sans-serif;font-size:11.6px;color:#333;font-weight:normal;white-space:nowrap;">SI</div>
<div style="position:absolute;right:595px;top:422.00px;line-height:20px;font-family:'Liberation Sans',sans-serif;font-size:12.23px;color:#333;font-weight:normal;white-space:nowrap;">2,00</div>
<div style="position:absolute;left:699px;top:422.00px;line-height:20px;font-family:'Liberation Sans',sans-serif;font-size:12.27px;color:#333;font-weight:normal;white-space:nowrap;">01/01/2024</div>
<div style="position:absolute;left:794px;top:422.00px;line-height:20px;font-family:'Liberation Sans',sans-serif;font-size:12.27px;color:#333;font-weight:normal;white-space:nowrap;">28/06/2024</div>
<div style="position:absolute;left:880px;top:422.00px;line-height:20px;font-family:'Liberation Sans',sans-serif;font-size:12.27px;color:#333;font-weight:normal;white-space:nowrap;">28/06/2024</div>
<div style="position:absolute;right:207px;top:422.00px;line-height:20px;font-family:'Liberation Sans',sans-serif;font-size:12.27px;color:#30558f;font-weight:normal;white-space:nowrap;">2.764</div>
<div style="position:absolute;right:100px;top:422.00px;line-height:20px;font-family:'Liberation Sans',sans-serif;font-size:12.27px;color:#30558f;font-weight:normal;white-space:nowrap;">5.528</div>
<div style="position:absolute;left:1194px;top:422.00px;line-height:20px;font-family:'Liberation Sans',sans-serif;font-size:11.6px;color:#30558f;font-weight:normal;white-space:nowrap;">KG</div>
<div style="position:absolute;left:37px;top:442.00px;line-height:20px;font-family:'Liberation Sans',sans-serif;font-size:12.17px;color:#0a0a0a;font-weight:normal;white-space:nowrap;">A/10122</div>
<div style="position:absolute;left:228px;top:442.00px;line-height:20px;font-family:'Liberation Sans',sans-serif;font-size:12.07px;color:#0a0a0a;font-weight:normal;white-space:nowrap;">Anclaje A2259 HEB300 L8566</div>
<div style="position:absolute;left:539px;top:442.00px;line-height:20px;font-family:'Liberation Sans',sans-serif;font-size:11.6px;color:#0a0a0a;font-weight:normal;white-space:nowrap;">SI</div>
<div style="position:absolute;right:595px;top:442.00px;line-height:20px;font-family:'Liberation Sans',sans-serif;font-size:12.23px;color:#0a0a0a;font-weight:normal;white-space:nowrap;">1,00</div>
<div style="position:absolute;left:699px;top:442.00px;line-height:20px;font-family:'Liberation Sans',sans-serif;font-size:12.27px;color:#0a0a0a;font-weight:normal;white-space:nowrap;">01/01/2024</div>
<div style="position:absolute;left:794px;top:442.00px;line-height:20px;font-family:'Liberation Sans',sans-serif;font-size:12.27px;color:#0a0a0a;font-weight:normal;white-space:nowrap;">28/06/2024</div>
<div style="position:absolute;left:880px;top:442.00px;line-height:20px;font-family:'Liberation Sans',sans-serif;font-size:12.27px;color:#0a0a0a;font-weight:normal;white-space:nowrap;">28/06/2024</div>
<div style="position:absolute;right:207px;top:442.00px;line-height:20px;font-family:'Liberation Sans',sans-serif;font-size:12.27px;color:#30558f;font-weight:normal;white-space:nowrap;">2.998</div>
<div style="position:absolute;right:100px;top:442.00px;line-height:20px;font-family:'Liberation Sans',sans-serif;font-size:12.27px;color:#30558f;font-weight:normal;white-space:nowrap;">2.998</div>
<div style="position:absolute;left:1194px;top:442.00px;line-height:20px;font-family:'Liberation Sans',sans-serif;font-size:11.6px;color:#30558f;font-weight:normal;white-space:nowrap;">KG</div>
<div style="position:absolute;left:1243px;top:402px;width:17px;height:74px;background:#f0f0f0"></div>
<div style="position:absolute;left:1243px;top:431px;width:16px;height:17px;background:#c4c4c4"></div>
<svg style="position:absolute;left:1248px;top:407px;" width="8" height="6" viewBox="0 0 8 6"><path d="M1 4.5 L4 1.3 L7 4.5" fill="none" stroke="#808080" stroke-width="1.4"/></svg>
<svg style="position:absolute;left:1248px;top:465px;" width="8" height="6" viewBox="0 0 8 6"><path d="M1 1.3 L4 4.5 L7 1.3" fill="none" stroke="#808080" stroke-width="1.4"/></svg>
<div style="position:absolute;left:23px;top:476px;width:1219px;height:17px;background:#f0f0f0"></div>
<div style="position:absolute;left:40px;top:476px;width:17px;height:17px;background:#c4c4c4"></div>
<div style="position:absolute;left:21px;top:494px;width:1239px;height:1px;background:#f0f0f0"></div>
<svg style="position:absolute;left:29px;top:481px;" width="6" height="7" viewBox="0 0 6 7"><path d="M4.3 1 L1.5 3.6 L4.3 6.2" fill="none" stroke="#8a8a8a" stroke-width="1.2"/></svg>
<svg style="position:absolute;left:1231px;top:481px;" width="6" height="7" viewBox="0 0 6 7"><path d="M1.5 1 L4.3 3.6 L1.5 6.2" fill="none" stroke="#8a8a8a" stroke-width="1.2"/></svg>
<div style="position:absolute;left:17px;top:502px;width:1248px;height:1px;background:#d2d2d2"></div>
<svg style="position:absolute;left:18px;top:503px;" width="24" height="24" viewBox="0 0 24 24"><path d="M4.9 7.3 L6.2 17.3 H17.4 L18.7 7.3" fill="none" stroke="#666" stroke-width="1.1"/>
<path d="M5.6 7.6 L8.4 4 L10.5 6.2 L12 4.1 L13.5 6.2 L15.6 4 L18 7.6 Z" fill="#555"/>
<circle cx="8.2" cy="18" r="1.6" fill="#fff" stroke="#666" stroke-width="1.1"/><circle cx="15.7" cy="18" r="1.6" fill="#fff" stroke="#666" stroke-width="1.1"/></svg>
<div style="position:absolute;left:45.1px;top:506.00px;line-height:20px;font-family:'Liberation Sans',sans-serif;font-size:12.2px;color:#4a3a6e;font-weight:normal;white-space:nowrap;">Materiales</div>
<svg style="position:absolute;left:119px;top:503px;" width="24" height="24" viewBox="0 0 24 24"><circle cx="12" cy="12.9" r="4.1" fill="none" stroke="#5e5e5e" stroke-width="2.6"/><circle cx="12" cy="12.9" r="6.4" fill="none" stroke="#6a6a6a" stroke-width="2.6" stroke-dasharray="2.27 2.27"/></svg>
<div style="position:absolute;left:146.4px;top:506.00px;line-height:20px;font-family:'Liberation Sans',sans-serif;font-size:12.2px;color:#3a5a88;font-weight:normal;white-space:nowrap;">Comerciales</div>
<svg style="position:absolute;left:236px;top:503px;" width="20" height="24" viewBox="0 0 20 24"><rect x="6" y="4" width="8" height="1.8" fill="#5e5e5e"/>
<path d="M6.7 5.8 V8.8 Q6.7 10.8 8 12 H12 Q13.3 10.8 13.3 8.8 V5.8" fill="none" stroke="#888" stroke-width="1"/>
<rect x="7.2" y="6.4" width="5.6" height="1.3" fill="#8a8a8a"/><rect x="7.2" y="10" width="5.6" height="1.4" fill="#6a6a6a"/>
<path d="M8 12 H12 L10.4 17.4 H9.6 Z" fill="#666"/>
<rect x="9.6" y="17.2" width="0.8" height="1.8" fill="#aaa"/><rect x="5" y="19" width="10" height="1.1" fill="#777"/></svg>
<div style="position:absolute;left:261.3px;top:506.00px;line-height:20px;font-family:'Liberation Sans',sans-serif;font-size:12.2px;color:#3a5a88;font-weight:normal;white-space:nowrap;">Operaciones</div>
<svg style="position:absolute;left:350px;top:503px;" width="24" height="24" viewBox="0 0 24 24"><g fill="#a4a8b4" stroke="#555" stroke-width="1.1"><rect x="3.6" y="4.5" width="3.6" height="3.6"/><rect x="3.6" y="10.3" width="3.6" height="3.4"/><rect x="3.6" y="16.1" width="3.6" height="3.4"/></g>
<g stroke="#777" stroke-width="1.5"><path d="M7.6 6.3 H18.8 M7.6 11.9 H18.8 M7.6 17.7 H18.8"/></g></svg>
<div style="position:absolute;left:376.4px;top:506.00px;line-height:20px;font-family:'Liberation Sans',sans-serif;font-size:12.2px;color:#3a5a88;font-weight:normal;white-space:nowrap;">Especificaciones</div>
<svg style="position:absolute;left:488px;top:503px;" width="20" height="24" viewBox="0 0 20 24"><rect x="6" y="4" width="8" height="1.8" fill="#5e5e5e"/>
<path d="M6.7 5.8 V8.8 Q6.7 10.8 8 12 H12 Q13.3 10.8 13.3 8.8 V5.8" fill="none" stroke="#888" stroke-width="1"/>
<rect x="7.2" y="6.4" width="5.6" height="1.3" fill="#8a8a8a"/><rect x="7.2" y="10" width="5.6" height="1.4" fill="#6a6a6a"/>
<path d="M8 12 H12 L10.4 17.4 H9.6 Z" fill="#666"/>
<rect x="9.6" y="17.2" width="0.8" height="1.8" fill="#aaa"/><rect x="5" y="19" width="10" height="1.1" fill="#777"/></svg>
<div style="position:absolute;left:515.4px;top:506.00px;line-height:20px;font-family:'Liberation Sans',sans-serif;font-size:12.2px;color:#3a5a88;font-weight:normal;white-space:nowrap;">Oper. CNC</div>
<div style="position:absolute;left:17px;top:527px;width:93px;height:2px;background:#3e2d5e"></div>
<div style="position:absolute;left:933px;top:509px;width:30px;height:19px;background:#e6e6e6"></div>
<div style="position:absolute;right:326px;top:507.00px;line-height:20px;font-family:'Liberation Sans',sans-serif;font-size:12.23px;color:#111;font-weight:normal;white-space:nowrap;">2,00</div>
<div style="position:absolute;left:966px;top:509px;width:291px;height:19px;background:#e6e6e6"></div>
<div style="position:absolute;left:966.5px;top:507.00px;line-height:20px;font-family:'Liberation Sans',sans-serif;font-size:12.2px;color:#111;font-weight:normal;white-space:nowrap;">Anclaje A1360 UPN350 L14980</div>
<div style="position:absolute;left:17px;top:530px;width:1248px;height:208px;border:1px solid #d2d2d2;border-bottom:1px solid #c6c6c6;background:#fff"></div>
<div style="position:absolute;left:1079px;top:555px;width:97px;height:19px;background:#e8e8e8"></div>
<div style="position:absolute;left:1176px;top:555px;width:66px;height:19px;background:#e8e8e8"></div>
<div style="position:absolute;left:34px;top:575px;width:1207px;height:19px;background:#ededf6"></div>
<div style="position:absolute;left:1079px;top:575px;width:97px;height:19px;background:#e8e8e8"></div>
<div style="position:absolute;left:1176px;top:575px;width:66px;height:19px;background:#e8e8e8"></div>
<div style="position:absolute;left:1079px;top:595px;width:97px;height:19px;background:#e8e8e8"></div>
<div style="position:absolute;left:1176px;top:595px;width:66px;height:19px;background:#e8e8e8"></div>
<div style="position:absolute;left:34px;top:615px;width:1207px;height:19px;background:#ededf6"></div>
<div style="position:absolute;left:1079px;top:615px;width:97px;height:19px;background:#e8e8e8"></div>
<div style="position:absolute;left:1176px;top:615px;width:66px;height:19px;background:#e8e8e8"></div>
<div style="position:absolute;left:1079px;top:635px;width:97px;height:19px;background:#e8e8e8"></div>
<div style="position:absolute;left:1176px;top:635px;width:66px;height:19px;background:#e8e8e8"></div>
<div style="position:absolute;left:34px;top:655px;width:1207px;height:19px;background:#ededf6"></div>
<div style="position:absolute;left:1079px;top:655px;width:97px;height:19px;background:#e8e8e8"></div>
<div style="position:absolute;left:1176px;top:655px;width:66px;height:19px;background:#e8e8e8"></div>
<div style="position:absolute;left:1079px;top:675px;width:97px;height:19px;background:#e8e8e8"></div>
<div style="position:absolute;left:1176px;top:675px;width:66px;height:19px;background:#e8e8e8"></div>
<div style="position:absolute;left:34px;top:695px;width:1207px;height:19px;background:#ededf6"></div>
<div style="position:absolute;left:1079px;top:695px;width:97px;height:19px;background:#e8e8e8"></div>
<div style="position:absolute;left:1176px;top:695px;width:66px;height:19px;background:#e8e8e8"></div>
<div style="position:absolute;left:34px;top:535px;width:1px;height:180px;background:#d6d6d6"></div>
<div style="position:absolute;left:46px;top:535px;width:1px;height:180px;background:#d6d6d6"></div>
<div style="position:absolute;left:116px;top:535px;width:1px;height:180px;background:#d6d6d6"></div>
<div style="position:absolute;left:239px;top:535px;width:1px;height:180px;background:#d6d6d6"></div>
<div style="position:absolute;left:442px;top:535px;width:1px;height:180px;background:#d6d6d6"></div>
<div style="position:absolute;left:576px;top:535px;width:1px;height:180px;background:#d6d6d6"></div>
<div style="position:absolute;left:702px;top:535px;width:1px;height:180px;background:#d6d6d6"></div>
<div style="position:absolute;left:853px;top:535px;width:1px;height:180px;background:#d6d6d6"></div>
<div style="position:absolute;left:906px;top:535px;width:1px;height:180px;background:#d6d6d6"></div>
<div style="position:absolute;left:959px;top:535px;width:1px;height:180px;background:#d6d6d6"></div>
<div style="position:absolute;left:1014px;top:535px;width:1px;height:180px;background:#d6d6d6"></div>
<div style="position:absolute;left:1079px;top:535px;width:1px;height:180px;background:#d6d6d6"></div>
<div style="position:absolute;left:1176px;top:535px;width:1px;height:180px;background:#d6d6d6"></div>
<div style="position:absolute;left:1242px;top:535px;width:1px;height:180px;background:#d6d6d6"></div>
<div style="position:absolute;left:23px;top:554px;width:1219px;height:1px;background:#d6d6d6"></div>
<div style="position:absolute;left:23px;top:574px;width:1219px;height:1px;background:#d6d6d6"></div>
<div style="position:absolute;left:23px;top:594px;width:1219px;height:1px;background:#d6d6d6"></div>
<div style="position:absolute;left:23px;top:614px;width:1219px;height:1px;background:#d6d6d6"></div>
<div style="position:absolute;left:23px;top:634px;width:1219px;height:1px;background:#d6d6d6"></div>
<div style="position:absolute;left:23px;top:654px;width:1219px;height:1px;background:#d6d6d6"></div>
<div style="position:absolute;left:23px;top:674px;width:1219px;height:1px;background:#d6d6d6"></div>
<div style="position:absolute;left:23px;top:694px;width:1219px;height:1px;background:#d6d6d6"></div>
<div style="position:absolute;left:23px;top:714px;width:1219px;height:1px;background:#d6d6d6"></div>
<div style="position:absolute;left:26px;top:541px;width:5px;height:5px;background:#cfcfcf"></div>
<div style="position:absolute;left:50px;top:535.00px;line-height:20px;font-family:'Liberation Sans',sans-serif;font-size:12.35px;color:#3a5a88;font-weight:normal;white-space:nowrap;">Marca</div>
<div style="position:absolute;left:120px;top:535.00px;line-height:20px;font-family:'Liberation Sans',sans-serif;font-size:12.35px;color:#3a5a88;font-weight:normal;white-space:nowrap;">Artículo / Nº Plano</div>
<div style="position:absolute;left:243px;top:535.00px;line-height:20px;font-family:'Liberation Sans',sans-serif;font-size:12.35px;color:#3a5a88;font-weight:normal;white-space:nowrap;">Descripción</div>
<div style="position:absolute;left:446px;top:535.00px;line-height:20px;font-family:'Liberation Sans',sans-serif;font-size:12.35px;color:#3a5a88;font-weight:normal;white-space:nowrap;">Materia Prima</div>
<div style="position:absolute;left:580px;top:535.00px;line-height:20px;font-family:'Liberation Sans',sans-serif;font-size:12.35px;color:#3a5a88;font-weight:normal;white-space:nowrap;">Material (Calidad)</div>
<div style="position:absolute;left:706px;top:535.00px;line-height:20px;font-family:'Liberation Sans',sans-serif;font-size:12.35px;color:#3a5a88;font-weight:normal;white-space:nowrap;">Descripción MP</div>
<div style="position:absolute;left:857px;top:535.00px;line-height:20px;font-family:'Liberation Sans',sans-serif;font-size:12.35px;color:#3a5a88;font-weight:normal;white-space:nowrap;">Piezas</div>
<div style="position:absolute;left:910px;top:535.00px;line-height:20px;font-family:'Liberation Sans',sans-serif;font-size:12.35px;color:#3a5a88;font-weight:normal;white-space:nowrap;">Largo</div>
<div style="position:absolute;left:963px;top:535.00px;line-height:20px;font-family:'Liberation Sans',sans-serif;font-size:12.35px;color:#3a5a88;font-weight:normal;white-space:nowrap;">Ancho</div>
<div style="position:absolute;left:1018px;top:535.00px;line-height:20px;font-family:'Liberation Sans',sans-serif;font-size:12.35px;color:#3a5a88;font-weight:normal;white-space:nowrap;">Espesor</div>
<div style="position:absolute;left:1083px;top:535.00px;line-height:20px;font-family:'Liberation Sans',sans-serif;font-size:12.35px;color:#3a5a88;font-weight:normal;white-space:nowrap;">Medición Auto</div>
<div style="position:absolute;left:1180px;top:535.00px;line-height:20px;font-family:'Liberation Sans',sans-serif;font-size:12.35px;color:#3a5a88;font-weight:normal;white-space:nowrap;">Ud. Stock</div>
<div style="position:absolute;left:49px;top:555.00px;line-height:20px;font-family:'Liberation Sans',sans-serif;font-size:12.22px;color:#3a3a3a;font-weight:normal;white-space:nowrap;">P1000</div>
<div style="position:absolute;left:119px;top:555.00px;line-height:20px;font-family:'Liberation Sans',sans-serif;font-size:12.29px;color:#3a3a3a;font-weight:normal;white-space:nowrap;">20250001/P1000</div>
<div style="position:absolute;left:242px;top:555.00px;line-height:20px;font-family:'Liberation Sans',sans-serif;font-size:11.93px;color:#3a3a3a;font-weight:normal;white-space:nowrap;">IPE-100</div>
<div style="position:absolute;left:445px;top:555.00px;line-height:20px;font-family:'Liberation Sans',sans-serif;font-size:12.4px;color:#3a3a3a;font-weight:normal;white-space:nowrap;">0105002</div>
<div style="position:absolute;left:579px;top:555.00px;line-height:20px;font-family:'Liberation Sans',sans-serif;font-size:11.98px;color:#3a3a3a;font-weight:normal;white-space:nowrap;">S275JR</div>
<div style="position:absolute;left:705px;top:555.00px;line-height:20px;font-family:'Liberation Sans',sans-serif;font-size:11.93px;color:#3a3a3a;font-weight:normal;white-space:nowrap;">IPE-100</div>
<div style="position:absolute;right:385px;top:555.00px;line-height:20px;font-family:'Liberation Sans',sans-serif;font-size:12.23px;color:#3a3a3a;font-weight:normal;white-space:nowrap;">5,00</div>
<div style="position:absolute;right:332px;top:555.00px;line-height:20px;font-family:'Liberation Sans',sans-serif;font-size:12.4px;color:#3a3a3a;font-weight:normal;white-space:nowrap;">6000</div>
<div style="position:absolute;right:277px;top:555.00px;line-height:20px;font-family:'Liberation Sans',sans-serif;font-size:12.4px;color:#3a3a3a;font-weight:normal;white-space:nowrap;">0</div>
<div style="position:absolute;right:212px;top:555.00px;line-height:20px;font-family:'Liberation Sans',sans-serif;font-size:12.4px;color:#3a3a3a;font-weight:normal;white-space:nowrap;">0</div>
<div style="position:absolute;right:115px;top:555.00px;line-height:20px;font-family:'Liberation Sans',sans-serif;font-size:12.29px;color:#30558f;font-weight:normal;white-space:nowrap;">243,00</div>
<div style="position:absolute;left:1179px;top:555.00px;line-height:20px;font-family:'Liberation Sans',sans-serif;font-size:11.6px;color:#30558f;font-weight:normal;white-space:nowrap;">KG</div>
<div style="position:absolute;left:49px;top:575.00px;line-height:20px;font-family:'Liberation Sans',sans-serif;font-size:12.22px;color:#3a3a3a;font-weight:normal;white-space:nowrap;">P1001</div>
<div style="position:absolute;left:119px;top:575.00px;line-height:20px;font-family:'Liberation Sans',sans-serif;font-size:12.29px;color:#3a3a3a;font-weight:normal;white-space:nowrap;">20250001/P1001</div>
<div style="position:absolute;left:242px;top:575.00px;line-height:20px;font-family:'Liberation Sans',sans-serif;font-size:11.93px;color:#3a3a3a;font-weight:normal;white-space:nowrap;">IPE-100</div>
<div style="position:absolute;left:445px;top:575.00px;line-height:20px;font-family:'Liberation Sans',sans-serif;font-size:12.4px;color:#3a3a3a;font-weight:normal;white-space:nowrap;">0105002</div>
<div style="position:absolute;left:579px;top:575.00px;line-height:20px;font-family:'Liberation Sans',sans-serif;font-size:11.98px;color:#3a3a3a;font-weight:normal;white-space:nowrap;">S275JR</div>
<div style="position:absolute;left:705px;top:575.00px;line-height:20px;font-family:'Liberation Sans',sans-serif;font-size:11.93px;color:#3a3a3a;font-weight:normal;white-space:nowrap;">IPE-100</div>
<div style="position:absolute;right:385px;top:575.00px;line-height:20px;font-family:'Liberation Sans',sans-serif;font-size:12.23px;color:#3a3a3a;font-weight:normal;white-space:nowrap;">4,00</div>
<div style="position:absolute;right:332px;top:575.00px;line-height:20px;font-family:'Liberation Sans',sans-serif;font-size:12.4px;color:#3a3a3a;font-weight:normal;white-space:nowrap;">1545</div>
<div style="position:absolute;right:277px;top:575.00px;line-height:20px;font-family:'Liberation Sans',sans-serif;font-size:12.4px;color:#3a3a3a;font-weight:normal;white-space:nowrap;">0</div>
<div style="position:absolute;right:212px;top:575.00px;line-height:20px;font-family:'Liberation Sans',sans-serif;font-size:12.4px;color:#3a3a3a;font-weight:normal;white-space:nowrap;">0</div>
<div style="position:absolute;right:115px;top:575.00px;line-height:20px;font-family:'Liberation Sans',sans-serif;font-size:12.27px;color:#30558f;font-weight:normal;white-space:nowrap;">50,04</div>
<div style="position:absolute;left:1179px;top:575.00px;line-height:20px;font-family:'Liberation Sans',sans-serif;font-size:11.6px;color:#30558f;font-weight:normal;white-space:nowrap;">KG</div>
<div style="position:absolute;left:49px;top:595.00px;line-height:20px;font-family:'Liberation Sans',sans-serif;font-size:12.22px;color:#3a3a3a;font-weight:normal;white-space:nowrap;">P1002</div>
<div style="position:absolute;left:119px;top:595.00px;line-height:20px;font-family:'Liberation Sans',sans-serif;font-size:12.29px;color:#3a3a3a;font-weight:normal;white-space:nowrap;">20250001/P1002</div>
<div style="position:absolute;left:242px;top:595.00px;line-height:20px;font-family:'Liberation Sans',sans-serif;font-size:11.89px;color:#3a3a3a;font-weight:normal;white-space:nowrap;">UPN-350</div>
<div style="position:absolute;left:445px;top:595.00px;line-height:20px;font-family:'Liberation Sans',sans-serif;font-size:12.4px;color:#3a3a3a;font-weight:normal;white-space:nowrap;">0106013</div>
<div style="position:absolute;left:579px;top:595.00px;line-height:20px;font-family:'Liberation Sans',sans-serif;font-size:11.98px;color:#3a3a3a;font-weight:normal;white-space:nowrap;">S275JR</div>
<div style="position:absolute;left:705px;top:595.00px;line-height:20px;font-family:'Liberation Sans',sans-serif;font-size:11.89px;color:#3a3a3a;font-weight:normal;white-space:nowrap;">UPN-350</div>
<div style="position:absolute;right:385px;top:595.00px;line-height:20px;font-family:'Liberation Sans',sans-serif;font-size:12.23px;color:#3a3a3a;font-weight:normal;white-space:nowrap;">1,00</div>
<div style="position:absolute;right:332px;top:595.00px;line-height:20px;font-family:'Liberation Sans',sans-serif;font-size:12.4px;color:#3a3a3a;font-weight:normal;white-space:nowrap;">14980</div>
<div style="position:absolute;right:277px;top:595.00px;line-height:20px;font-family:'Liberation Sans',sans-serif;font-size:12.4px;color:#3a3a3a;font-weight:normal;white-space:nowrap;">0</div>
<div style="position:absolute;right:212px;top:595.00px;line-height:20px;font-family:'Liberation Sans',sans-serif;font-size:12.4px;color:#3a3a3a;font-weight:normal;white-space:nowrap;">0</div>
<div style="position:absolute;right:115px;top:595.00px;line-height:20px;font-family:'Liberation Sans',sans-serif;font-size:12.29px;color:#30558f;font-weight:normal;white-space:nowrap;">907,79</div>
<div style="position:absolute;left:1179px;top:595.00px;line-height:20px;font-family:'Liberation Sans',sans-serif;font-size:11.6px;color:#30558f;font-weight:normal;white-space:nowrap;">KG</div>
<div style="position:absolute;left:49px;top:615.00px;line-height:20px;font-family:'Liberation Sans',sans-serif;font-size:12.22px;color:#3a3a3a;font-weight:normal;white-space:nowrap;">P1003</div>
<div style="position:absolute;left:119px;top:615.00px;line-height:20px;font-family:'Liberation Sans',sans-serif;font-size:12.29px;color:#3a3a3a;font-weight:normal;white-space:nowrap;">20250001/P1003</div>
<div style="position:absolute;left:242px;top:615.00px;line-height:20px;font-family:'Liberation Sans',sans-serif;font-size:11.89px;color:#3a3a3a;font-weight:normal;white-space:nowrap;">UPN-350</div>
<div style="position:absolute;left:445px;top:615.00px;line-height:20px;font-family:'Liberation Sans',sans-serif;font-size:12.4px;color:#3a3a3a;font-weight:normal;white-space:nowrap;">0106013</div>
<div style="position:absolute;left:579px;top:615.00px;line-height:20px;font-family:'Liberation Sans',sans-serif;font-size:11.98px;color:#3a3a3a;font-weight:normal;white-space:nowrap;">S275JR</div>
<div style="position:absolute;left:705px;top:615.00px;line-height:20px;font-family:'Liberation Sans',sans-serif;font-size:11.89px;color:#3a3a3a;font-weight:normal;white-space:nowrap;">UPN-350</div>
<div style="position:absolute;right:385px;top:615.00px;line-height:20px;font-family:'Liberation Sans',sans-serif;font-size:12.23px;color:#3a3a3a;font-weight:normal;white-space:nowrap;">2,00</div>
<div style="position:absolute;right:332px;top:615.00px;line-height:20px;font-family:'Liberation Sans',sans-serif;font-size:12.4px;color:#3a3a3a;font-weight:normal;white-space:nowrap;">2300</div>
<div style="position:absolute;right:277px;top:615.00px;line-height:20px;font-family:'Liberation Sans',sans-serif;font-size:12.4px;color:#3a3a3a;font-weight:normal;white-space:nowrap;">0</div>
<div style="position:absolute;right:212px;top:615.00px;line-height:20px;font-family:'Liberation Sans',sans-serif;font-size:12.4px;color:#3a3a3a;font-weight:normal;white-space:nowrap;">0</div>
<div style="position:absolute;right:115px;top:615.00px;line-height:20px;font-family:'Liberation Sans',sans-serif;font-size:12.29px;color:#30558f;font-weight:normal;white-space:nowrap;">278,76</div>
<div style="position:absolute;left:1179px;top:615.00px;line-height:20px;font-family:'Liberation Sans',sans-serif;font-size:11.6px;color:#30558f;font-weight:normal;white-space:nowrap;">KG</div>
<div style="position:absolute;left:49px;top:635.00px;line-height:20px;font-family:'Liberation Sans',sans-serif;font-size:12.22px;color:#3a3a3a;font-weight:normal;white-space:nowrap;">P1004</div>
<div style="position:absolute;left:119px;top:635.00px;line-height:20px;font-family:'Liberation Sans',sans-serif;font-size:12.29px;color:#3a3a3a;font-weight:normal;white-space:nowrap;">20250001/P1004</div>
<div style="position:absolute;left:242px;top:635.00px;line-height:20px;font-family:'Liberation Sans',sans-serif;font-size:11.89px;color:#3a3a3a;font-weight:normal;white-space:nowrap;">UPN-280</div>
<div style="position:absolute;left:445px;top:635.00px;line-height:20px;font-family:'Liberation Sans',sans-serif;font-size:12.4px;color:#3a3a3a;font-weight:normal;white-space:nowrap;">0106011</div>
<div style="position:absolute;left:579px;top:635.00px;line-height:20px;font-family:'Liberation Sans',sans-serif;font-size:11.98px;color:#3a3a3a;font-weight:normal;white-space:nowrap;">S275JR</div>
<div style="position:absolute;left:705px;top:635.00px;line-height:20px;font-family:'Liberation Sans',sans-serif;font-size:11.89px;color:#3a3a3a;font-weight:normal;white-space:nowrap;">UPN-280</div>
<div style="position:absolute;right:385px;top:635.00px;line-height:20px;font-family:'Liberation Sans',sans-serif;font-size:12.23px;color:#3a3a3a;font-weight:normal;white-space:nowrap;">1,00</div>
<div style="position:absolute;right:332px;top:635.00px;line-height:20px;font-family:'Liberation Sans',sans-serif;font-size:12.4px;color:#3a3a3a;font-weight:normal;white-space:nowrap;">13823</div>
<div style="position:absolute;right:277px;top:635.00px;line-height:20px;font-family:'Liberation Sans',sans-serif;font-size:12.4px;color:#3a3a3a;font-weight:normal;white-space:nowrap;">0</div>
<div style="position:absolute;right:212px;top:635.00px;line-height:20px;font-family:'Liberation Sans',sans-serif;font-size:12.4px;color:#3a3a3a;font-weight:normal;white-space:nowrap;">0</div>
<div style="position:absolute;right:115px;top:635.00px;line-height:20px;font-family:'Liberation Sans',sans-serif;font-size:12.29px;color:#30558f;font-weight:normal;white-space:nowrap;">577,80</div>
<div style="position:absolute;left:1179px;top:635.00px;line-height:20px;font-family:'Liberation Sans',sans-serif;font-size:11.6px;color:#30558f;font-weight:normal;white-space:nowrap;">KG</div>
<div style="position:absolute;left:49px;top:655.00px;line-height:20px;font-family:'Liberation Sans',sans-serif;font-size:12.22px;color:#3a3a3a;font-weight:normal;white-space:nowrap;">P1005</div>
<div style="position:absolute;left:119px;top:655.00px;line-height:20px;font-family:'Liberation Sans',sans-serif;font-size:12.29px;color:#3a3a3a;font-weight:normal;white-space:nowrap;">20250001/P1005</div>
<div style="position:absolute;left:242px;top:655.00px;line-height:20px;font-family:'Liberation Sans',sans-serif;font-size:11.89px;color:#3a3a3a;font-weight:normal;white-space:nowrap;">UPN-280</div>
<div style="position:absolute;left:445px;top:655.00px;line-height:20px;font-family:'Liberation Sans',sans-serif;font-size:12.4px;color:#3a3a3a;font-weight:normal;white-space:nowrap;">0106011</div>
<div style="position:absolute;left:579px;top:655.00px;line-height:20px;font-family:'Liberation Sans',sans-serif;font-size:11.98px;color:#3a3a3a;font-weight:normal;white-space:nowrap;">S275JR</div>
<div style="position:absolute;left:705px;top:655.00px;line-height:20px;font-family:'Liberation Sans',sans-serif;font-size:11.89px;color:#3a3a3a;font-weight:normal;white-space:nowrap;">UPN-280</div>
<div style="position:absolute;right:385px;top:655.00px;line-height:20px;font-family:'Liberation Sans',sans-serif;font-size:12.23px;color:#3a3a3a;font-weight:normal;white-space:nowrap;">2,00</div>
<div style="position:absolute;right:332px;top:655.00px;line-height:20px;font-family:'Liberation Sans',sans-serif;font-size:12.4px;color:#3a3a3a;font-weight:normal;white-space:nowrap;">1683</div>
<div style="position:absolute;right:277px;top:655.00px;line-height:20px;font-family:'Liberation Sans',sans-serif;font-size:12.4px;color:#3a3a3a;font-weight:normal;white-space:nowrap;">0</div>
<div style="position:absolute;right:212px;top:655.00px;line-height:20px;font-family:'Liberation Sans',sans-serif;font-size:12.4px;color:#3a3a3a;font-weight:normal;white-space:nowrap;">0</div>
<div style="position:absolute;right:115px;top:655.00px;line-height:20px;font-family:'Liberation Sans',sans-serif;font-size:12.29px;color:#30558f;font-weight:normal;white-space:nowrap;">140,70</div>
<div style="position:absolute;left:1179px;top:655.00px;line-height:20px;font-family:'Liberation Sans',sans-serif;font-size:11.6px;color:#30558f;font-weight:normal;white-space:nowrap;">KG</div>
<div style="position:absolute;left:49px;top:675.00px;line-height:20px;font-family:'Liberation Sans',sans-serif;font-size:12.22px;color:#3a3a3a;font-weight:normal;white-space:nowrap;">P1006</div>
<div style="position:absolute;left:119px;top:675.00px;line-height:20px;font-family:'Liberation Sans',sans-serif;font-size:12.29px;color:#3a3a3a;font-weight:normal;white-space:nowrap;">20250001/P1006</div>
<div style="position:absolute;left:242px;top:675.00px;line-height:20px;font-family:'Liberation Sans',sans-serif;font-size:12.02px;color:#3a3a3a;font-weight:normal;white-space:nowrap;">Chapa e = 12 mm</div>
<div style="position:absolute;left:445px;top:675.00px;line-height:20px;font-family:'Liberation Sans',sans-serif;font-size:12.4px;color:#3a3a3a;font-weight:normal;white-space:nowrap;">0115010</div>
<div style="position:absolute;left:579px;top:675.00px;line-height:20px;font-family:'Liberation Sans',sans-serif;font-size:11.98px;color:#3a3a3a;font-weight:normal;white-space:nowrap;">S275JR</div>
<div style="position:absolute;left:705px;top:675.00px;line-height:20px;font-family:'Liberation Sans',sans-serif;font-size:12.02px;color:#3a3a3a;font-weight:normal;white-space:nowrap;">Chapa e = 12 mm</div>
<div style="position:absolute;right:385px;top:675.00px;line-height:20px;font-family:'Liberation Sans',sans-serif;font-size:12.23px;color:#3a3a3a;font-weight:normal;white-space:nowrap;">3,00</div>
<div style="position:absolute;right:332px;top:675.00px;line-height:20px;font-family:'Liberation Sans',sans-serif;font-size:12.4px;color:#3a3a3a;font-weight:normal;white-space:nowrap;">1200</div>
<div style="position:absolute;right:277px;top:675.00px;line-height:20px;font-family:'Liberation Sans',sans-serif;font-size:12.4px;color:#3a3a3a;font-weight:normal;white-space:nowrap;">1000</div>
<div style="position:absolute;right:212px;top:675.00px;line-height:20px;font-family:'Liberation Sans',sans-serif;font-size:12.4px;color:#3a3a3a;font-weight:normal;white-space:nowrap;">12</div>
<div style="position:absolute;right:115px;top:675.00px;line-height:20px;font-family:'Liberation Sans',sans-serif;font-size:12.29px;color:#30558f;font-weight:normal;white-space:nowrap;">339,54</div>
<div style="position:absolute;left:1179px;top:675.00px;line-height:20px;font-family:'Liberation Sans',sans-serif;font-size:11.6px;color:#30558f;font-weight:normal;white-space:nowrap;">KG</div>
<div style="position:absolute;left:49px;top:695.00px;line-height:20px;font-family:'Liberation Sans',sans-serif;font-size:12.22px;color:#3a3a3a;font-weight:normal;white-space:nowrap;">P1007</div>
<div style="position:absolute;left:119px;top:695.00px;line-height:20px;font-family:'Liberation Sans',sans-serif;font-size:12.29px;color:#3a3a3a;font-weight:normal;white-space:nowrap;">20250001/P1007</div>
<div style="position:absolute;left:242px;top:695.00px;line-height:20px;font-family:'Liberation Sans',sans-serif;font-size:11.99px;color:#3a3a3a;font-weight:normal;white-space:nowrap;">Chapa e = 4 mm</div>
<div style="position:absolute;left:445px;top:695.00px;line-height:20px;font-family:'Liberation Sans',sans-serif;font-size:12.4px;color:#3a3a3a;font-weight:normal;white-space:nowrap;">0115002</div>
<div style="position:absolute;left:579px;top:695.00px;line-height:20px;font-family:'Liberation Sans',sans-serif;font-size:11.98px;color:#3a3a3a;font-weight:normal;white-space:nowrap;">S275JR</div>
<div style="position:absolute;left:705px;top:695.00px;line-height:20px;font-family:'Liberation Sans',sans-serif;font-size:11.99px;color:#3a3a3a;font-weight:normal;white-space:nowrap;">Chapa e = 4 mm</div>
<div style="position:absolute;right:385px;top:695.00px;line-height:20px;font-family:'Liberation Sans',sans-serif;font-size:12.23px;color:#3a3a3a;font-weight:normal;white-space:nowrap;">4,00</div>
<div style="position:absolute;right:332px;top:695.00px;line-height:20px;font-family:'Liberation Sans',sans-serif;font-size:12.4px;color:#3a3a3a;font-weight:normal;white-space:nowrap;">1500</div>
<div style="position:absolute;right:277px;top:695.00px;line-height:20px;font-family:'Liberation Sans',sans-serif;font-size:12.4px;color:#3a3a3a;font-weight:normal;white-space:nowrap;">1200</div>
<div style="position:absolute;right:212px;top:695.00px;line-height:20px;font-family:'Liberation Sans',sans-serif;font-size:12.4px;color:#3a3a3a;font-weight:normal;white-space:nowrap;">4</div>
<div style="position:absolute;right:115px;top:695.00px;line-height:20px;font-family:'Liberation Sans',sans-serif;font-size:12.29px;color:#30558f;font-weight:normal;white-space:nowrap;">226,36</div>
<div style="position:absolute;left:1179px;top:695.00px;line-height:20px;font-family:'Liberation Sans',sans-serif;font-size:11.6px;color:#30558f;font-weight:normal;white-space:nowrap;">KG</div>
<div style="position:absolute;left:1243px;top:535px;width:17px;height:181px;background:#f0f0f0"></div>
<div style="position:absolute;left:1243px;top:617px;width:16px;height:17px;background:#c4c4c4"></div>
<svg style="position:absolute;left:1248px;top:540px;" width="8" height="6" viewBox="0 0 8 6"><path d="M1 4.5 L4 1.3 L7 4.5" fill="none" stroke="#808080" stroke-width="1.4"/></svg>
<svg style="position:absolute;left:1248px;top:705px;" width="8" height="6" viewBox="0 0 8 6"><path d="M1 1.3 L4 4.5 L7 1.3" fill="none" stroke="#808080" stroke-width="1.4"/></svg>
<div style="position:absolute;left:22px;top:716px;width:1220px;height:17px;background:#f0f0f0"></div>
<div style="position:absolute;left:40px;top:716px;width:17px;height:17px;background:#c4c4c4"></div>
<div style="position:absolute;left:21px;top:734px;width:1239px;height:1px;background:#f0f0f0"></div>
<svg style="position:absolute;left:29px;top:721px;" width="6" height="7" viewBox="0 0 6 7"><path d="M4.3 1 L1.5 3.6 L4.3 6.2" fill="none" stroke="#8a8a8a" stroke-width="1.2"/></svg>
<svg style="position:absolute;left:1231px;top:721px;" width="6" height="7" viewBox="0 0 6 7"><path d="M1.5 1 L4.3 3.6 L1.5 6.2" fill="none" stroke="#8a8a8a" stroke-width="1.2"/></svg>
<div style="position:absolute;left:64px;top:746.00px;line-height:20px;font-family:'Liberation Sans',sans-serif;font-size:11.9px;color:#3a5a86;font-weight:normal;white-space:nowrap;">Kg. Orden</div>
<div style="position:absolute;right:1056px;top:746.00px;line-height:20px;font-family:'Liberation Sans',sans-serif;font-size:12.3px;color:#2f4f7a;font-weight:bold;white-space:nowrap;">490.842</div>
<div style="position:absolute;left:248.4px;top:745.50px;line-height:20px;font-family:'Liberation Sans',sans-serif;font-size:11.65px;color:#3a5a86;font-weight:normal;white-space:nowrap;">KG. Cto. Gral:</div>
<div style="position:absolute;right:868.5px;top:745.00px;line-height:20px;font-family:'Liberation Sans',sans-serif;font-size:12.3px;color:#2f4f7a;font-weight:bold;white-space:nowrap;">375.474</div>
<div style="position:absolute;left:434.3px;top:745.50px;line-height:20px;font-family:'Liberation Sans',sans-serif;font-size:11.65px;color:#3a5a86;font-weight:normal;white-space:nowrap;">KG. Conjunto:</div>
<div style="position:absolute;right:682.5px;top:745.00px;line-height:20px;font-family:'Liberation Sans',sans-serif;font-size:12.3px;color:#2f4f7a;font-weight:bold;white-space:nowrap;">5.528</div>
<div style="position:absolute;left:1170px;top:745px;width:95px;height:19px;background:#c9c9c9"></div>
<div style="position:absolute;left:1170.0px;width:95px;text-align:center;top:745.00px;line-height:20px;font-family:'Liberation Sans',sans-serif;font-size:12px;color:#2f5590;font-weight:normal;white-space:nowrap;">Ocultar Ctos.</div>
</body></html>
